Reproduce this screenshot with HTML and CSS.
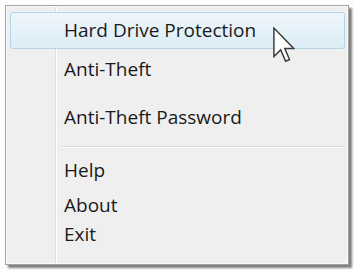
FILE: index.html
```html
<!DOCTYPE html>
<html>
<head>
<meta charset="utf-8">
<link rel="stylesheet" href="styles.css">
</head>
<body>
<div class="menu">
  <div class="item active">Hard Drive Protection</div>
  <div class="item second">Anti-Theft</div>
  <div class="item third">Anti-Theft Password</div>
  <div class="sep"></div>
  <div class="item low help">Help</div>
  <div class="item low about">About</div>
  <div class="item low">Exit</div>
  <svg class="cursor" width="22" height="36" viewBox="0 0 12 19.5">
    <path d="M0.5 0.5 L0.5 16 L4.2 12.4 L6.9 18.6 L9 17.7 L6.4 11.6 L11.3 11.6 Z" fill="#fff" stroke="#3a3a3a" stroke-width="0.8" stroke-linejoin="miter"/>
  </svg>
</div>
</body>
</html>
```
FILE: styles.css
```css
html, body {
  margin: 0;
  padding: 0;
  background: #fdfdfd;
}
body {
  width: 354px;
  height: 270px;
  overflow: hidden;
}
.menu {
  position: relative;
  box-sizing: border-box;
  margin: 5px 0 0 5px;
  width: 344px;
  height: 260px;
  border: 1px solid #a3a3a3;
  background:
    linear-gradient(to right, transparent 49px, #dedede 49px, #dedede 50px, #ffffff 50px, #ffffff 51px, transparent 51px),
    #efefef;
  box-shadow: inset 0 0 0 1px #fafafa, 3px 3px 2px rgba(0, 0, 0, 0.5);
  padding: 6px 3px 0 4px;
  font-family: "Open Sans", "Noto Sans", sans-serif;
  font-size: 19px;
  color: #1a1a1a;
}
.item {
  box-sizing: border-box;
  height: 37px;
  line-height: 35px;
  padding-left: 53px;
  border: 1px solid transparent;
  white-space: nowrap;
}
.item.active {
  border-color: #b3d6e8;
  border-radius: 3px;
  background: linear-gradient(#eef6fb, #dcedf6);
}
.item.second {
  margin-top: 2px;
}
.item.third {
  margin-top: 11px;
}
.sep {
  margin: 10px 0 8px 51px;
  height: 1px;
  background: #dcdcdc;
  border-bottom: 1px solid #ffffff;
}
.item.low {
  height: 29px;
  line-height: 27px;
}
.item.help {
  margin-top: 2px;
}
.item.about {
  margin-top: 6px;
}
.cursor {
  position: absolute;
  left: 267px;
  top: 21px;
}
```
